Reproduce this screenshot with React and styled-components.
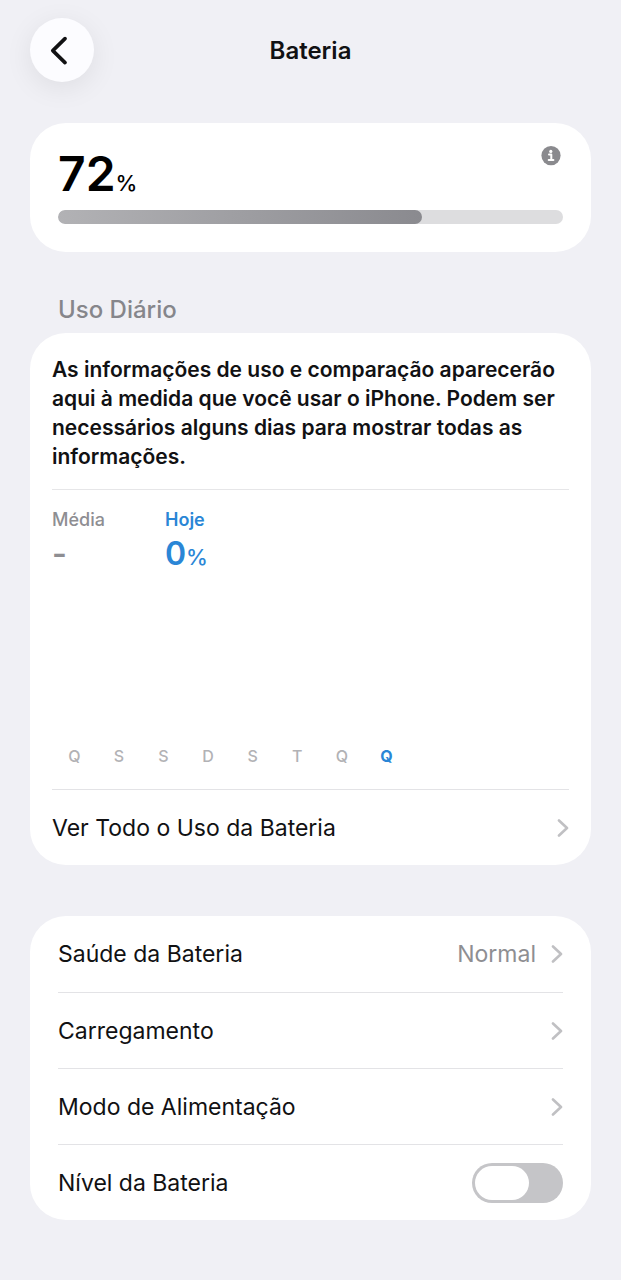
import React, { Component } from "react";
import styled, { createGlobalStyle } from "styled-components";

const GlobalStyle = createGlobalStyle`
  * {
    box-sizing: border-box;
  }
  body {
    margin: 0;
    background: #f0f0f5;
    color: #111113;
    font-family: Inter, "Liberation Sans", sans-serif;
    -webkit-font-smoothing: antialiased;
  }
`;

const Page = styled.main`
  padding: 18px 30px 60px;
`;

const Header = styled.header`
  display: grid;
  grid-template-columns: 64px 1fr 64px;
  align-items: center;
  margin-bottom: 41px;
`;

const BackButton = styled.button`
  display: flex;
  align-items: center;
  justify-content: center;
  width: 64px;
  height: 64px;
  padding: 0;
  border: 0;
  border-radius: 50%;
  background: #fcfcff;
  box-shadow: 0 6px 28px rgba(0, 0, 0, 0.08);
  color: #111113;
`;

const Title = styled.h1`
  margin: 0;
  padding-top: 2px;
  font-size: 24px;
  line-height: 30px;
  font-weight: 600;
  text-align: center;
`;

const Card = styled.section`
  padding: ${props => props.$padding || "0 28px"};
  border-radius: 36px;
  background: #fff;
`;

const LevelTop = styled.div`
  display: flex;
  align-items: flex-start;
  justify-content: space-between;
`;

const Percent = styled.div`
  font-size: ${props => props.$size}px;
  line-height: ${props => props.$line}px;
  font-weight: 600;
  color: ${props => props.$color || "#000"};

  small {
    font-size: 22px;
    line-height: 1;
    font-weight: 500;
  }
`;

const InfoButton = styled.button`
  display: flex;
  padding: 0 2px;
  border: 0;
  background: none;
`;

const Track = styled.div`
  height: 14px;
  margin-top: 8px;
  border-radius: 7px;
  background: #dddddf;
  overflow: hidden;
`;

const Fill = styled.div`
  height: 100%;
  border-radius: 7px;
  background: linear-gradient(to right, #b2b2b5, #8a8a8f);
`;

const SectionTitle = styled.h2`
  margin: 43px 28px 8px;
  font-size: 24px;
  line-height: 30px;
  font-weight: 500;
  color: #86868b;
`;

const Notice = styled.p`
  margin: 0;
  padding-bottom: 18px;
  border-bottom: 1px solid #e6e6e8;
  font-size: 21px;
  line-height: 29px;
  font-weight: 600;
`;

const Stats = styled.dl`
  display: flex;
  margin: 0;
  padding-top: 18px;
`;

const Stat = styled.div`
  width: 113px;
  color: ${props => (props.$active ? "#2a86d6" : "#8e8e92")};

  dt {
    font-size: 18px;
    line-height: 24px;
    font-weight: ${props => (props.$active ? 600 : 500)};
  }
  dd {
    margin: 2px 0 0;
    font-size: 32px;
    line-height: 40px;
    font-weight: 600;
  }
`;

const Days = styled.div`
  display: grid;
  grid-template-columns: repeat(8, 1fr);
  width: 69%;
  height: 215px;
  padding-bottom: 23px;
  align-items: end;
`;

const Day = styled.span`
  font-size: 16px;
  line-height: 20px;
  font-weight: ${props => (props.$active ? 700 : 500)};
  color: ${props => (props.$active ? "#2a86d6" : "#b2b2b5")};
  text-align: center;
`;

const Row = styled.div`
  display: flex;
  align-items: center;
  justify-content: space-between;
  height: 76px;
  font-size: 23px;
  line-height: 30px;
  color: inherit;
  text-decoration: none;

  & + & {
    border-top: 1px solid #e3e3e6;
  }
`;

const UsageRow = styled(Row)`
  border-top: 1px solid #e3e3e6;
`;

const Detail = styled.span`
  display: flex;
  align-items: center;
  gap: 15px;
  color: #8e8e92;
`;

const Group = styled(Card)`
  margin-top: 51px;
`;

const Switch = styled.input`
  appearance: none;
  display: flex;
  width: 91px;
  height: 40px;
  margin: 0;
  padding: 3px;
  border-radius: 20px;
  background: #c5c5c8;

  &::before {
    content: "";
    width: 54px;
    border-radius: 17px;
    background: #fff;
  }
  &:checked {
    justify-content: flex-end;
    background: #34c759;
  }
`;

const Chevron = () => (
  <svg width="12" height="18" viewBox="0 0 12 18" fill="none" aria-hidden="true">
    <path
      d="M2 1.5L10 9L2 16.5"
      stroke="#c0c0c3"
      strokeWidth="2.6"
      strokeLinecap="round"
      strokeLinejoin="round"
    />
  </svg>
);

const BackIcon = () => (
  <svg width="28" height="30" viewBox="0 0 28 30" fill="none" aria-hidden="true">
    <path
      d="M17 3.6L4.8 15.6L17 27.6"
      stroke="currentColor"
      strokeWidth="3.6"
      strokeLinecap="round"
      strokeLinejoin="round"
    />
  </svg>
);

const InfoIcon = () => (
  <svg width="20" height="20" viewBox="0 0 20 20" aria-hidden="true">
    <circle cx="10" cy="9.6" r="9.6" fill="#8a8a8e" />
    <circle cx="9.8" cy="5.4" r="1.6" fill="#fff" />
    <path
      d="M8 8.6H10.3V13.8M7.7 14H12.4"
      fill="none"
      stroke="#fff"
      strokeWidth="2"
      strokeLinecap="round"
      strokeLinejoin="round"
    />
  </svg>
);

export class BatteryApp extends Component {
  constructor(props) {
    super(props);

    this.state = {
      level: 72,
      showLevel: false,
      days: ["Q", "S", "S", "D", "S", "T", "Q", "Q"],
      links: [
        { id: 1, label: "Saúde da Bateria", detail: "Normal" },
        { id: 2, label: "Carregamento" },
        { id: 3, label: "Modo de Alimentação" }
      ]
    };
  }

  handleToggle = e => {
    this.setState({ showLevel: e.target.checked });
  };

  render() {
    const { level, showLevel, days, links } = this.state;

    return (
      <Page>
        <GlobalStyle />
        <Header>
          <BackButton aria-label="Voltar">
            <BackIcon />
          </BackButton>
          <Title>Bateria</Title>
        </Header>

        <Card $padding="23px 28px 28px">
          <LevelTop>
            <Percent $size={48} $line={56}>
              {level}
              <small>%</small>
            </Percent>
            <InfoButton aria-label="Informações">
              <InfoIcon />
            </InfoButton>
          </LevelTop>
          <Track role="progressbar" aria-label="Bateria" aria-valuenow={level}>
            <Fill style={{ width: `${level}%` }} />
          </Track>
        </Card>

        <SectionTitle>Uso Diário</SectionTitle>
        <Card $padding="22px 22px 0">
          <Notice>
            As informações de uso e comparação aparecerão aqui à medida que você
            usar o iPhone. Podem ser necessários alguns dias para mostrar todas
            as informações.
          </Notice>
          <Stats>
            <Stat>
              <dt>Média</dt>
              <dd>-</dd>
            </Stat>
            <Stat $active>
              <dt>Hoje</dt>
              <Percent as="dd" $size={32} $line={40} $color="#2a86d6">
                0<small>%</small>
              </Percent>
            </Stat>
          </Stats>
          <Days>
            {days.map((day, i) => (
              <Day key={i} $active={i === days.length - 1}>
                {day}
              </Day>
            ))}
          </Days>
          <UsageRow as="a" href="#uso">
            Ver Todo o Uso da Bateria
            <Chevron />
          </UsageRow>
        </Card>

        <Group>
          {links.map(link => (
            <Row as="a" href="#" key={link.id}>
              {link.label}
              <Detail>
                {link.detail}
                <Chevron />
              </Detail>
            </Row>
          ))}
          <Row as="label">
            Nível da Bateria
            <Switch
              type="checkbox"
              role="switch"
              checked={showLevel}
              onChange={this.handleToggle}
            />
          </Row>
        </Group>
      </Page>
    );
  }
}

export default BatteryApp;
